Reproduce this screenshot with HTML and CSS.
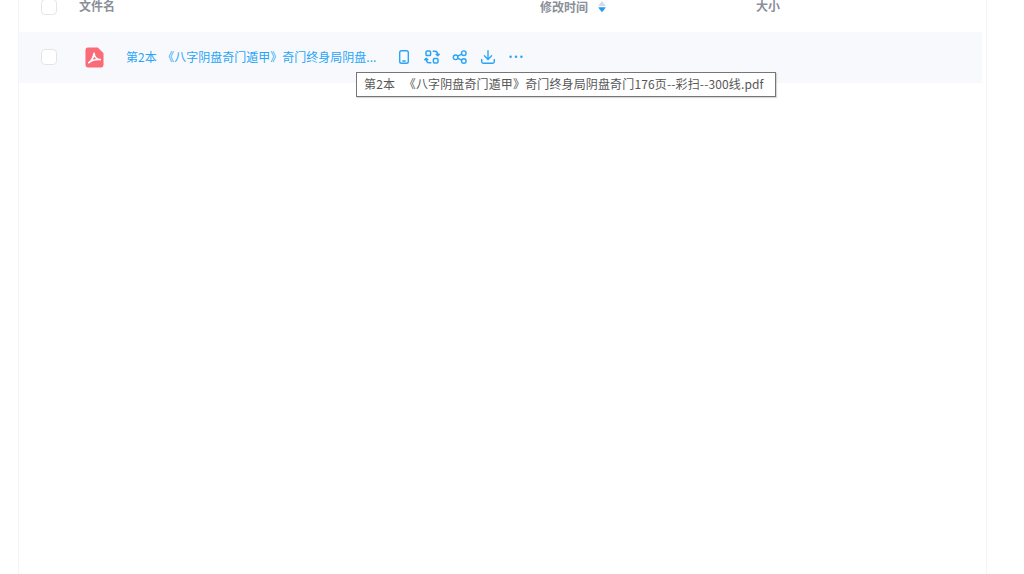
FILE: index.html
```html
<!DOCTYPE html>
<html lang="zh-CN">
<head>
  <meta charset="UTF-8" />
  <title>文件列表</title>
  <link rel="stylesheet" href="styles.css">
</head>
<body>
  <main class="panel">
    <div class="list-head">
      <span class="check"></span>
      <span class="col-name">文件名</span>
      <span class="col-time">修改时间
        <svg class="sort" width="12" height="13" viewBox="0 0 12 13">
          <path d="M6 1 L9.6 5.4 Q9.8 6 9 6 H3 Q2.2 6 2.4 5.4 Z" fill="#d5dae4" />
          <path d="M3 7.2 H9 Q9.8 7.2 9.6 7.8 L6.6 11.6 Q6 12.2 5.4 11.6 L2.4 7.8 Q2.2 7.2 3 7.2 Z" fill="#1e9bf5" />
        </svg>
      </span>
      <span class="col-size">大小</span>
    </div>

    <div class="file-row">
      <span class="check"></span>
      <svg class="file-icon" width="19" height="21" viewBox="0 0 20 22">
        <path d="M3 0.5 H13.5 L19.5 6.5 V19 a2.5 2.5 0 0 1 -2.5 2.5 H3 A2.5 2.5 0 0 1 0.5 19 V3 A2.5 2.5 0 0 1 3 0.5 Z" fill="#fb6b77" />
        <path d="M4 16.5 C6.5 15 8.5 12 9.6 6.5 C10 11 12 13 16 13.2 C12 13 7.5 13.5 4 16.5 Z" fill="none" stroke="#fff" stroke-width="1.7" stroke-linejoin="round" />
      </svg>
      <a class="file-name">第2本 《八字阴盘奇门遁甲》奇门终身局阴盘...</a>
      <div class="actions">
        <svg width="18" height="18" viewBox="0 0 18 18" fill="none" stroke="#2aa5f5" stroke-width="1.4" stroke-linecap="round" stroke-linejoin="round">
          <rect x="4.7" y="2.7" width="8.6" height="12.6" rx="1.8" />
          <path d="M7.8 13 H10.2" />
        </svg>
        <svg width="18" height="18" viewBox="0 0 18 18" fill="none" stroke="#2aa5f5" stroke-width="1.5" stroke-linecap="round" stroke-linejoin="round">
          <rect x="3" y="3" width="4.6" height="4.6" rx="1.2" />
          <rect x="10.4" y="10.4" width="4.6" height="4.6" rx="1.2" />
          <path d="M10.2 3.2 H11.8 C13.8 3.2 14.8 4.4 14.8 7.6 M13.2 6.2 L14.8 7.8 L16.2 6.2" />
          <path d="M7.8 14.8 H6.2 C4.2 14.8 3.2 13.6 3.2 10.4 M1.8 11.8 L3.2 10.2 L4.8 11.8" />
        </svg>
        <svg width="18" height="18" viewBox="0 0 18 18" fill="none" stroke="#2aa5f5" stroke-width="1.4" stroke-linecap="round" stroke-linejoin="round">
          <circle cx="4.6" cy="9.3" r="2.3" />
          <circle cx="12.8" cy="5.2" r="2.3" />
          <circle cx="12.8" cy="13" r="2.3" />
          <path d="M6.7 8.2 L10.7 6.2 M6.7 10.4 L10.7 12" />
        </svg>
        <svg width="18" height="18" viewBox="0 0 18 18" fill="none" stroke="#2aa5f5" stroke-width="1.4" stroke-linecap="round" stroke-linejoin="round">
          <path d="M9 2.8 V11.3 M5.4 7.8 L9 11.4 L12.6 7.8" />
          <path d="M2.7 11.5 V13.5 a1.8 1.8 0 0 0 1.8 1.8 H13.5 a1.8 1.8 0 0 0 1.8 -1.8 V11.5" />
        </svg>
        <svg width="18" height="18" viewBox="0 0 18 18" fill="#2aa5f5">
          <circle cx="3.6" cy="8.8" r="1.25" />
          <circle cx="9" cy="8.8" r="1.25" />
          <circle cx="14.4" cy="8.8" r="1.25" />
        </svg>
      </div>
    </div>
  </main>

  <div class="tooltip">第2本 &nbsp;《八字阴盘奇门遁甲》奇门终身局阴盘奇门176页--彩扫--300线.pdf</div>
</body>
</html>
```

FILE: styles.css
```css
* {
  box-sizing: border-box;
  margin: 0;
  padding: 0;
  font-family: "Noto Sans CJK SC", "Noto Sans", sans-serif;
}

html,
body {
  height: 100%;
  overflow: hidden;
  background: #fff;
}

.panel {
  width: 969px;
  height: 574px;
  margin-left: 18px;
  padding-right: 4px;
  border-left: 1px solid #f3f4f7;
  border-right: 1px solid #f3f4f7;
}

.list-head {
  display: flex;
  align-items: flex-start;
  height: 32px;
  padding-left: 22px;
  font-size: 12px;
  font-weight: 700;
  line-height: 11px;
  color: #8a8f99;
}

.list-head .check {
  margin-top: -1px;
}

.col-name {
  width: 461px;
  margin-left: 22px;
}

.col-time {
  display: flex;
  align-items: center;
  gap: 8px;
  width: 216px;
}

.check {
  flex-shrink: 0;
  width: 16px;
  height: 16px;
  background: #fff;
  border: 1px solid #e3e5ea;
  border-radius: 4px;
}

.file-row {
  display: flex;
  align-items: center;
  height: 51px;
  padding-left: 22px;
  padding-bottom: 1px;
  background: #f8f9fd;
}

.file-icon {
  flex-shrink: 0;
  margin-left: 28px;
}

.file-name {
  width: 253px;
  margin-left: 22px;
  padding-bottom: 2px;
  font-size: 12px;
  word-spacing: 3px;
  color: #2aa5f5;
  white-space: nowrap;
}

.actions {
  display: flex;
  gap: 10px;
  margin-left: 16px;
}

.tooltip {
  position: absolute;
  left: 356px;
  top: 72px;
  width: 420px;
  height: 25px;
  padding-left: 7px;
  font-size: 12px;
  line-height: 21px;
  letter-spacing: 0.14px;
  word-spacing: 1.5px;
  color: #575757;
  white-space: nowrap;
  background: #fff;
  border: 1px solid #767676;
  box-shadow: 1px 1px 1px rgba(0, 0, 0, 0.15);
}
```
